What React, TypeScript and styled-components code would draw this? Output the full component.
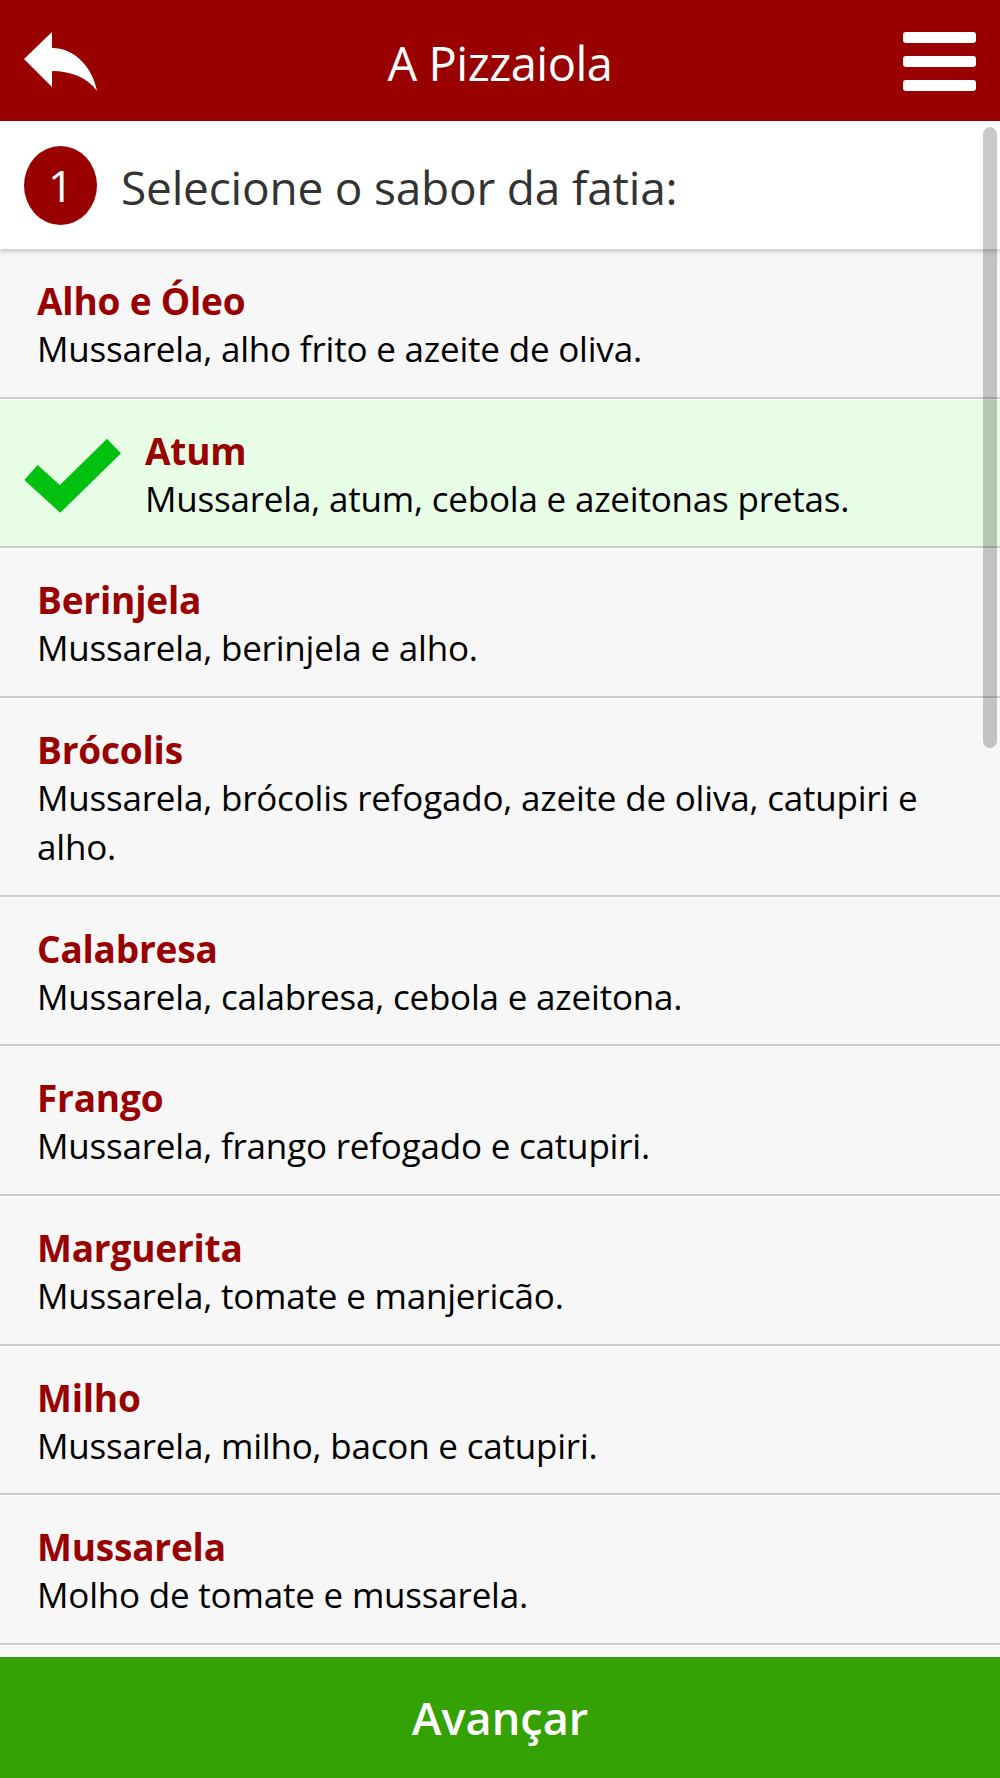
import * as React from "react";
import styled, { createGlobalStyle } from "styled-components";

type Flavor = {
  name: string;
  description: string;
};

const flavors: Flavor[] = [
  { name: "Alho e Óleo", description: "Mussarela, alho frito e azeite de oliva." },
  { name: "Atum", description: "Mussarela, atum, cebola e azeitonas pretas." },
  { name: "Berinjela", description: "Mussarela, berinjela e alho." },
  {
    name: "Brócolis",
    description: "Mussarela, brócolis refogado, azeite de oliva, catupiri e alho.",
  },
  { name: "Calabresa", description: "Mussarela, calabresa, cebola e azeitona." },
  { name: "Frango", description: "Mussarela, frango refogado e catupiri." },
  { name: "Marguerita", description: "Mussarela, tomate e manjericão." },
  { name: "Milho", description: "Mussarela, milho, bacon e catupiri." },
  { name: "Mussarela", description: "Molho de tomate e mussarela." },
];

const GlobalStyle = createGlobalStyle`
  html, body {
    margin: 0;
    padding: 0;
    background: #ffffff;
  }
  body {
    font-family: "Open Sans", "Noto Sans", "Liberation Sans", sans-serif;
    -webkit-font-smoothing: antialiased;
  }
`;

function BackIcon() {
  return (
    <svg width="73" height="59" viewBox="0 0 73 59">
      <path
        d="M0 27 L28 0 L28 16 C50 16 68 34 73 59 C63 45 46 39 28 39 L28 55 Z"
        fill="#ffffff"
      />
    </svg>
  );
}

function CheckIcon() {
  return (
    <svg width="97" height="75" viewBox="0 0 97 75">
      <polyline
        points="7,33.5 36,60 90,7"
        fill="none"
        stroke="#00c010"
        strokeWidth="20"
        strokeLinejoin="miter"
        strokeLinecap="butt"
      />
    </svg>
  );
}

export default function App() {
  const [selected, setSelected] = React.useState("Atum");

  return (
    <Page>
      <GlobalStyle />
      <Header>
        <BackButton aria-label="Voltar">
          <BackIcon />
        </BackButton>
        <Title>A Pizzaiola</Title>
        <MenuButton aria-label="Menu">
          <MenuBar />
          <MenuBar />
          <MenuBar />
        </MenuButton>
      </Header>

      <Main>
        <Intro>
          <StepBadge>1</StepBadge>
          <IntroText>Selecione o sabor da fatia:</IntroText>
        </Intro>

        <List>
          {flavors.map((flavor) => {
            const active = flavor.name === selected;
            return (
              <Row
                key={flavor.name}
                $active={active}
                onClick={() => setSelected(flavor.name)}
              >
                {active && (
                  <Check>
                    <CheckIcon />
                  </Check>
                )}
                <RowText>
                  <FlavorName>{flavor.name}</FlavorName>
                  <FlavorDescription>{flavor.description}</FlavorDescription>
                </RowText>
              </Row>
            );
          })}
        </List>

        <ScrollThumb />
      </Main>

      <NextButton>Avançar</NextButton>
    </Page>
  );
}

const Page = styled.div`
  width: 1000px;
  height: 1778px;
  display: flex;
  flex-direction: column;
  overflow: hidden;
`;

const Header = styled.header`
  height: 121px;
  flex-shrink: 0;
  background: #990000;
  display: grid;
  grid-template-columns: 1fr auto 1fr;
  align-items: center;
  padding: 0 24px;
  box-sizing: border-box;
`;

const BackButton = styled.div`
  justify-self: start;
  display: flex;
  margin-top: 2px;
`;

const Title = styled.h1`
  margin: 0;
  color: #ffffff;
  font-size: 47px;
  font-weight: 400;
  line-height: 1;
  margin-top: 6px;
  letter-spacing: -0.5px;
`;

const MenuButton = styled.div`
  justify-self: end;
  display: flex;
  flex-direction: column;
  gap: 13px;
  margin-top: 1px;
`;

const MenuBar = styled.span`
  display: block;
  width: 73px;
  height: 11px;
  border-radius: 3px;
  background: #ffffff;
`;

const Main = styled.main`
  flex: 1;
  position: relative;
  overflow: hidden;
  background: #f8f8f8;
`;

const Intro = styled.div`
  position: relative;
  z-index: 1;
  height: 128px;
  box-sizing: border-box;
  background: #ffffff;
  display: flex;
  align-items: center;
  gap: 24px;
  padding: 0 24px;
  box-shadow: 0 2px 5px rgba(0, 0, 0, 0.25);
`;

const StepBadge = styled.div`
  width: 73px;
  height: 79px;
  border-radius: 50%;
  background: #990000;
  color: #ffffff;
  display: flex;
  align-items: center;
  justify-content: center;
  font-size: 44px;
  flex-shrink: 0;
`;

const IntroText = styled.div`
  color: #333333;
  font-size: 46px;
  letter-spacing: -0.2px;
  margin-top: 4px;
`;

const List = styled.ul`
  list-style: none;
  margin: 0;
  padding: 0;
  border-bottom: 1px solid #ffffff;
`;

const Row = styled.li<{ $active?: boolean }>`
  display: flex;
  align-items: center;
  background: ${(props) => (props.$active ? "#e8fde5" : "#f7f7f7")};
  border-top: 1px solid #ffffff;
  border-bottom: 2px solid #cccccc;
  padding: 27px 37px 23px ${(props) => (props.$active ? "0" : "37px")};
  cursor: pointer;
`;

const Check = styled.div`
  width: 145px;
  flex-shrink: 0;
  padding-left: 24px;
  box-sizing: border-box;
  display: flex;
  margin-top: 2px;
`;

const RowText = styled.div`
  display: flex;
  flex-direction: column;
  min-width: 0;
`;

const FlavorName = styled.div`
  color: #990000;
  font-size: 37px;
  font-weight: 700;
  line-height: 48px;
  letter-spacing: -0.2px;
`;

const FlavorDescription = styled.div`
  color: #000000;
  font-size: 35px;
  line-height: 48.7px;
  letter-spacing: -0.2px;
`;

const ScrollThumb = styled.div`
  position: absolute;
  z-index: 2;
  top: 6px;
  right: 3px;
  width: 14px;
  height: 621px;
  border-radius: 7px;
  background: rgba(0, 0, 0, 0.21);
`;

const NextButton = styled.button`
  height: 121px;
  flex-shrink: 0;
  border: none;
  background: #34a104;
  color: #ffffff;
  font-family: inherit;
  font-size: 45px;
  font-weight: 600;
  cursor: pointer;
`;
